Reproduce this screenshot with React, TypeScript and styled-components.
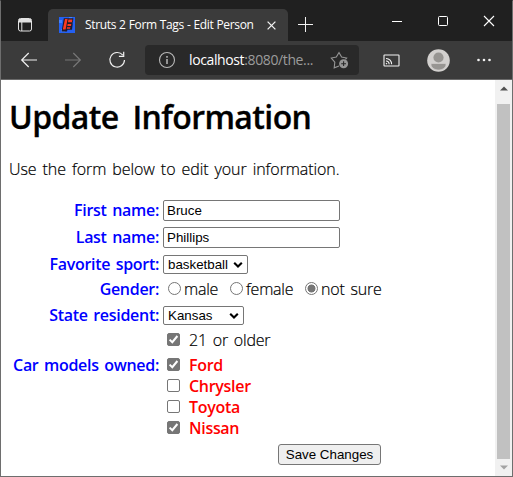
import React from 'react';
import styled, { createGlobalStyle } from 'styled-components';

const GlobalStyle = createGlobalStyle`
  * { box-sizing: border-box; }
  body { margin: 0; background: #fff; }
`;

const Window = styled.div`
  width: 513px;
  height: 477px;
  display: flex;
  flex-direction: column;
  overflow: hidden;
  border: 1px solid #6e6e6e;
  border-top-color: #202020;
  background: #fff;
  font-family: "Open Sans", "Noto Sans CJK KR", sans-serif;
`;

const TabStrip = styled.div`
  flex: none;
  height: 40px;
  display: flex;
  align-items: flex-end;
  background: #202020;
`;

const TabActions = styled.div`
  width: 47px;
  height: 32px;
  padding: 8px 0 0 16px;
`;

const Tab = styled.div`
  width: 240px;
  height: 32px;
  padding: 0 12px 0 11px;
  display: flex;
  align-items: center;
  border-radius: 5px 5px 0 0;
  background: #3b3b3b;
`;

const TabTitle = styled.span`
  flex: 1;
  margin-left: 10px;
  white-space: nowrap;
  font-size: 12px;
  line-height: 18px;
  letter-spacing: -0.35px;
  word-spacing: 0.3px;
  color: #fff;
`;

const NewTab = styled.div`
  width: 34px;
  height: 32px;
  padding: 8px 0 0 10px;
`;

const WindowControls = styled.div`
  align-self: flex-start;
  margin: 12px 0 0 67px;
  display: flex;
  gap: 30px;
`;

const Toolbar = styled.div`
  flex: none;
  height: 39px;
  display: flex;
  align-items: center;
  background: #3b3b3b;
  border-bottom: 1px solid #6a6a6a;
`;

const Navigation = styled.div`
  width: 144px;
  padding-left: 19px;
  display: flex;
  gap: 26px;
`;

const AddressBar = styled.div`
  width: 214px;
  height: 30px;
  padding: 0 10px 0 13px;
  display: flex;
  align-items: center;
  border-radius: 4px;
  background: #292929;
`;

const Url = styled.span`
  flex: 1;
  margin-left: 13px;
  white-space: nowrap;
  font-size: 14px;
  line-height: 20px;
  letter-spacing: -0.38px;
  color: #9c9c9c;
`;

const Host = styled.span`
  color: #fff;
`;

const ToolbarActions = styled.div`
  flex: 1;
  padding-left: 24px;
  display: flex;
  align-items: center;
`;

const CastSlot = styled.div`
  width: 44px;
  display: flex;
`;

const AvatarSlot = styled.div`
  width: 50px;
  display: flex;
`;

const Viewport = styled.div`
  flex: 1;
  min-height: 0;
  display: flex;
`;

const Page = styled.main`
  flex: 1;
  padding-left: 8px;
  color: #000;
`;

const Heading = styled.h1`
  margin: 16px 0 0;
  height: 42px;
  white-space: nowrap;
  font-size: 32px;
  line-height: 42px;
  font-weight: 600;
  letter-spacing: -0.6px;
  word-spacing: 6px;
  -webkit-text-stroke: 0.3px #000;
`;

const Intro = styled.p`
  margin: 20px 0 17px;
  height: 22px;
  white-space: nowrap;
  font-size: 16px;
  line-height: 22px;
  font-weight: 300;
  letter-spacing: -0.08px;
  word-spacing: 2px;
  -webkit-text-stroke: 0.2px #000;
`;

const Form = styled.form`
  margin: 0;
`;

const Row = styled.div<{ $height: number; $before?: number }>`
  display: grid;
  grid-template-columns: 150px 1fr;
  grid-template-rows: ${(p) => p.$height}px;
  column-gap: 4px;
  align-items: center;
  height: ${(p) => p.$height}px;
  margin-top: ${(p) => p.$before ?? 0}px;
`;

const Label = styled.label<{ $lift?: number }>`
  padding-bottom: ${(p) => (p.$lift ?? 0) * 2}px;
  white-space: nowrap;
  text-align: right;
  font-size: 16px;
  line-height: 22px;
  font-weight: 600;
  letter-spacing: -0.3px;
  word-spacing: 1.7px;
  color: #0000ff;
`;

const TextField = styled.input`
  width: 177px;
  height: 21px;
  padding: 1px 3px;
  border: 1px solid #767676;
  border-radius: 2px;
  background: #fff;
  color: #000;
  outline: none;
  font: 13.333px "Liberation Sans", Arial, sans-serif;
`;

const SelectBox = styled.div<{ $width: number }>`
  width: ${(p) => p.$width}px;
  height: 19px;
  padding: 0 4px;
  display: flex;
  align-items: center;
  justify-content: space-between;
  border: 1px solid #767676;
  border-radius: 2px;
  background: #fff;
  font: 13.333px "Liberation Sans", Arial, sans-serif;
`;

const Options = styled.div`
  display: flex;
  align-items: center;
  padding-left: 5px;
`;

const Radio = styled.input`
  appearance: none;
  flex: none;
  width: 13px;
  height: 13px;
  margin: 0 3px 0 0;
  border: 1px solid #767676;
  border-radius: 50%;
  background: #fff;
  &:checked { background: radial-gradient(circle, #767676 0 3.7px, #fff 4.3px); }
`;

const Text = styled.span<{ $width?: number }>`
  width: ${(p) => (p.$width ? p.$width + 'px' : 'auto')};
  height: 22px;
  white-space: nowrap;
  font-size: 16px;
  line-height: 22px;
  font-weight: 300;
  letter-spacing: -0.22px;
  word-spacing: 2px;
  -webkit-text-stroke: 0.2px #000;
`;

const CheckLine = styled.label`
  display: flex;
  align-items: center;
  gap: 9px;
  padding-left: 4px;
`;

const CarName = styled.span`
  height: 22px;
  font-size: 16px;
  line-height: 22px;
  font-weight: 600;
  letter-spacing: -0.3px;
  color: #ff0000;
`;

const Submit = styled.button`
  display: block;
  width: 103px;
  height: 21px;
  margin: 6px 0 0 269px;
  padding: 0;
  border: 1px solid #767676;
  border-radius: 3px;
  background: #efefef;
  color: #000;
  white-space: nowrap;
  font: 13.333px/19px "Liberation Sans", Arial, sans-serif;
`;

const Scrollbar = styled.div`
  width: 17px;
  display: flex;
  flex-direction: column;
  align-items: center;
  justify-content: space-between;
  background: #f1f1f1;
`;

const ScrollButton = styled.div`
  height: 17px;
  display: flex;
  align-items: center;
`;

const Thumb = styled.div`
  width: 13px;
  height: 355px;
  margin-top: 6px;
  background: #c1c1c1;
`;

function Check({ checked }: { checked?: boolean }) {
  return (
    <svg width="13" height="13" viewBox="0 0 13 13">
      <rect x="0.5" y="0.5" width="12" height="12" rx="1.5" fill={checked ? '#767676' : '#fff'} stroke="#767676" />
      {checked && <path d="M2.6 6.6 5.3 9.2 10.4 3" fill="none" stroke="#fff" strokeWidth="2" />}
    </svg>
  );
}

function Select({ value, width }: { value: string; width: number }) {
  return (
    <SelectBox $width={width}>
      {value}
      <svg width="10" height="8" viewBox="0 0 10 8">
        <path d="M1.2 1.7 5 5.5 8.8 1.7" fill="none" stroke="#000" strokeWidth="2.1" />
      </svg>
    </SelectBox>
  );
}

const cars = [
  { name: 'Chrysler', checked: false },
  { name: 'Toyota', checked: false },
  { name: 'Nissan', checked: true },
];

export default function App() {
  return (
    <>
      <GlobalStyle />
      <Window>
        <TabStrip>
          <TabActions>
            <svg width="16" height="16" viewBox="0 0 16 16" fill="none" stroke="#e2e2e2" display="block">
              <rect x="1.5" y="1.5" width="13" height="12.5" rx="2" />
              <path d="M2 3h12M2 4.5h12" strokeWidth="2" />
              <path d="M4.8 5v9" />
            </svg>
          </TabActions>
          <Tab>
            <svg width="16" height="16" viewBox="0 0 16 16">
              <rect width="16" height="16" fill="#2460f2" />
              <path d="M0 3h3v3H0zM10 0h3v2h-3zM2 12h4v3H2z" fill="#4382ff" />
              <path d="M4.8 1.2h9.6l-.6 4.6h-1l1 .6-.8 6.4H8.4L8 14.6H2.6z" fill="#201b2c" />
              <path d="M6 2h2.6L6.6 12.6H3.8zM9.4 2.6h4l-.4 2.6H9zM8.7 7h3.6L12 9H8.3zM8 10.2h3.4l-.4 1.6H7.8z" fill="#ff3a20" />
            </svg>
            <TabTitle>Struts 2 Form Tags - Edit Person</TabTitle>
            <svg width="9" height="9" viewBox="0 0 9 9" stroke="#f2f2f2" strokeWidth="1.3">
              <path d="M.6.6l7.8 7.8M8.4.6.6 8.4" />
            </svg>
          </Tab>
          <NewTab>
            <svg width="15" height="15" viewBox="0 0 15 15" stroke="#f2f2f2" display="block">
              <path d="M7.5 0v15M0 7.5h15" />
            </svg>
          </NewTab>
          <WindowControls>
            <svg width="16" height="16" viewBox="0 0 16 16" stroke="#fff">
              <path d="M3 8.5h10" />
            </svg>
            <svg width="16" height="16" viewBox="0 0 16 16" stroke="#fff" fill="none">
              <rect x="3.5" y="3.5" width="9" height="9" rx="1" />
            </svg>
            <svg width="16" height="16" viewBox="0 0 16 16" stroke="#fff" strokeWidth="1.1">
              <path d="M3 3l10 10M13 3 3 13" />
            </svg>
          </WindowControls>
        </TabStrip>
        <Toolbar>
          <Navigation>
            <svg width="18" height="18" viewBox="0 0 18 18" fill="none" stroke="#f0f0f0" strokeWidth="1.2">
              <path d="M17 9H1.7M8.7 2 1.7 9l7 7" />
            </svg>
            <svg width="18" height="18" viewBox="0 0 18 18" fill="none" stroke="#777" strokeWidth="1.2">
              <path d="M1 9h15.3M9.3 2l7 7-7 7" />
            </svg>
            <svg width="18" height="18" viewBox="0 0 18 18" fill="none" stroke="#f0f0f0" strokeWidth="1.2">
              <path d="M14.8 4.1A7.3 7.3 0 1 0 16.5 9M15.7.8v4.5h-4.8" />
            </svg>
          </Navigation>
          <AddressBar>
            <svg width="18" height="18" viewBox="0 0 18 18" fill="none" stroke="#b8b8b8">
              <circle cx="9" cy="9" r="7.5" strokeWidth="1.1" />
              <path d="M9 8v5M9 5v1.8" strokeWidth="1.5" />
            </svg>
            <Url><Host>localhost</Host>:8080/the...</Url>
            <svg width="19" height="18" viewBox="0 0 19 18" fill="none" stroke="#969696" strokeWidth="1.1">
              <path d="M9 15 4.2 16.8l.6-5.6L1.3 7l5-.9L9 1.5l2.6 4.6 5 .9-1.1 1.3" />
              <circle cx="13.6" cy="12.7" r="4.5" fill="#969696" stroke="none" />
              <path d="M11.2 12.7H16M13.6 10.3v4.8" stroke="#292929" />
            </svg>
          </AddressBar>
          <ToolbarActions>
            <CastSlot>
              <svg width="17" height="13" viewBox="0 0 17 13" fill="none" stroke="#f3f3f3" strokeWidth="1.1">
                <rect x="1" y="1" width="15" height="11" rx=".5" />
                <path d="M3 4.5A5.5 5.5 0 0 1 8.6 10.3M3 7a3 3 0 0 1 3.1 3.3M3 9.2l1 1" />
              </svg>
            </CastSlot>
            <AvatarSlot>
              <svg width="23" height="23" viewBox="0 0 23 23">
                <circle cx="11.5" cy="11.5" r="11.3" fill="#d2d0ce" />
                <circle cx="11.5" cy="8.5" r="5.1" fill="#979592" />
                <path d="M4 15.4q0-.9 1-.9h13q1 0 1 .9c0 3.5-4 5.6-7.5 5.6S4 18.9 4 15.4z" fill="#979592" stroke="#d2d0ce" strokeWidth=".7" />
              </svg>
            </AvatarSlot>
            <svg width="14" height="4" viewBox="1 0 14 4" fill="#f3f3f3">
              <circle cx="2.5" cy="2" r="1.3" /><circle cx="8" cy="2" r="1.3" /><circle cx="13.5" cy="2" r="1.3" />
            </svg>
          </ToolbarActions>
        </Toolbar>
        <Viewport>
          <Page>
            <Heading>Update Information</Heading>
            <Intro>Use the form below to edit your information.</Intro>
            <Form>
              <Row $height={27}><Label $lift={1}>First name:</Label><TextField defaultValue="Bruce" /></Row>
              <Row $height={27}><Label $lift={1}>Last name:</Label><TextField defaultValue="Phillips" /></Row>
              <Row $height={27}><Label $lift={1}>Favorite sport:</Label><Select value="basketball" width={85} /></Row>
              <Row $height={21}>
                <Label>Gender:</Label>
                <Options>
                  <Radio type="radio" name="gender" /><Text $width={46}>male</Text>
                  <Radio type="radio" name="gender" /><Text $width={59}>female</Text>
                  <Radio type="radio" name="gender" defaultChecked /><Text>not sure</Text>
                </Options>
              </Row>
              <Row $height={33}><Label $lift={1}>State resident:</Label><Select value="Kansas" width={81} /></Row>
              <Row $height={15}><span /><CheckLine><Check checked /><Text>21 or older</Text></CheckLine></Row>
              <Row $height={21} $before={7}>
                <Label>Car models owned:</Label>
                <CheckLine><Check checked /><CarName>Ford</CarName></CheckLine>
              </Row>
              {cars.map((car) => (
                <Row key={car.name} $height={21}>
                  <span /><CheckLine><Check checked={car.checked} /><CarName>{car.name}</CarName></CheckLine>
                </Row>
              ))}
              <Submit type="button">Save Changes</Submit>
            </Form>
          </Page>
          <Scrollbar>
            <ScrollButton>
              <svg width="8" height="5" viewBox="0 0 8 5"><path d="M0 4.5 4 .5l4 4z" fill="#505050" /></svg>
            </ScrollButton>
            <Thumb />
            <ScrollButton>
              <svg width="8" height="5" viewBox="0 0 8 5"><path d="M0 .5l4 4 4-4z" fill="#a3a3a3" /></svg>
            </ScrollButton>
          </Scrollbar>
        </Viewport>
      </Window>
    </>
  );
}
